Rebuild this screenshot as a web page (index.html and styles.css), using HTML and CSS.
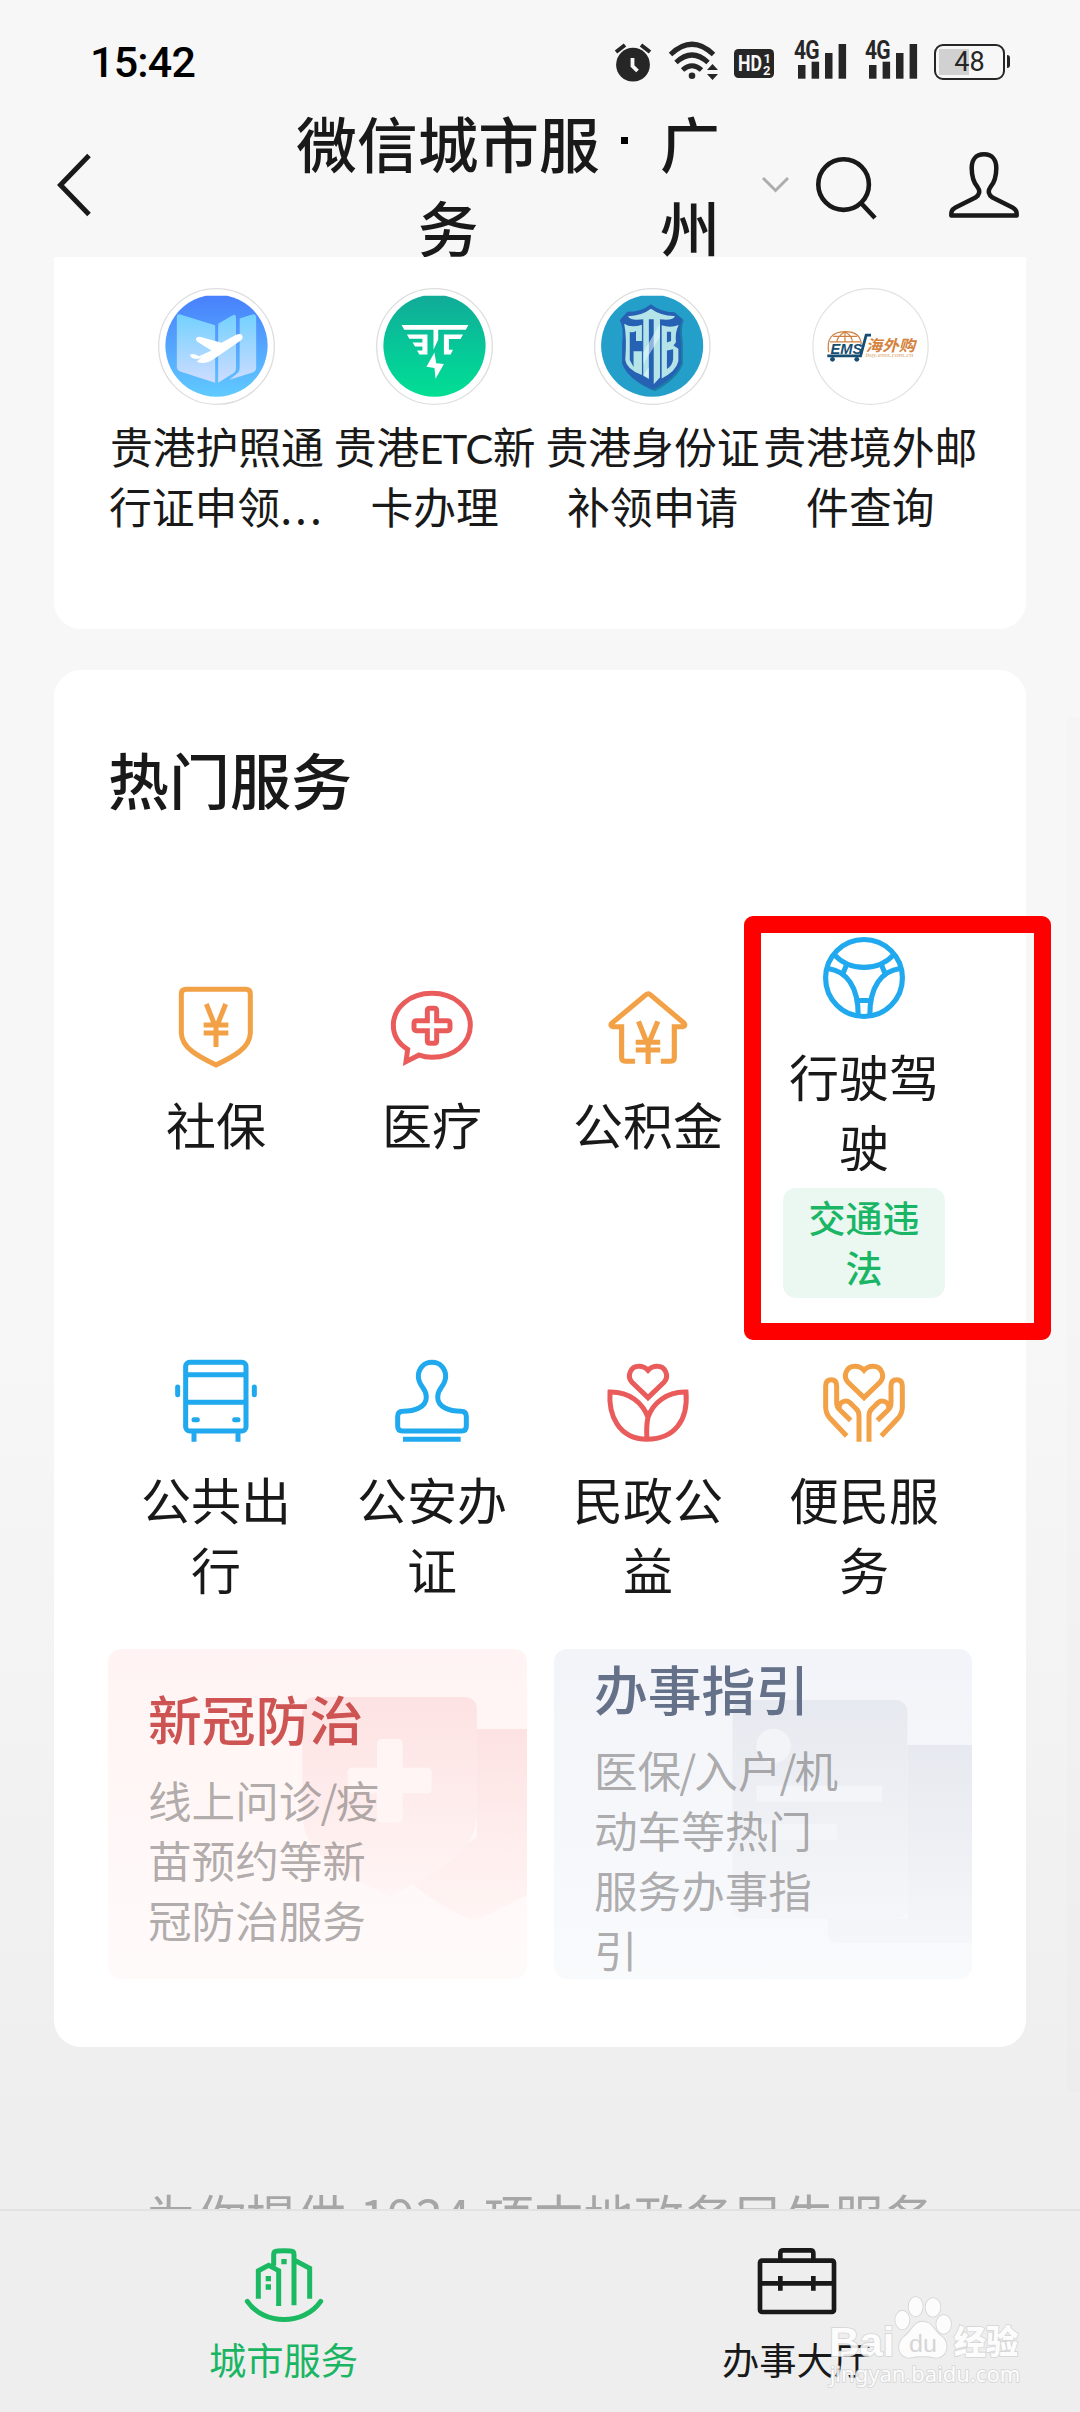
FILE: index.html
```html
<!DOCTYPE html>
<html lang="zh-CN">
<head>
<meta charset="utf-8">
<title>微信城市服务</title>
<link rel="stylesheet" href="styles.css">
</head>
<body>
<div class="screen">
  <header class="top">
    <div class="status">
      <span class="clock">15:42</span>
      <div class="status-icons">
        <svg width="38" height="42" viewBox="614 42 38 42">
          <circle cx="633" cy="64.7" r="16.9" fill="#262626"/>
          <path d="M616 52l9-7M650 52l-9-7" stroke="#262626" stroke-width="4" fill="none"/>
          <path d="M632.5 58v8l5 5" stroke="#f7f7f7" stroke-width="3.8" fill="none"/>
        </svg>
        <svg class="wifi" width="52" height="42" viewBox="668 40 52 42" fill="none" stroke="#262626" stroke-width="5">
          <path d="M670.500 54.500Q692 34 713.500 54.500M676 62.500Q692 47.500 708 62.500M682.500 70Q692 61.500 701.500 70"/>
          <circle cx="692" cy="75.800" r="3.300" fill="#262626" stroke="none"/>
          <path d="M712.500 64l5.500 6h-11zM712.500 80l5.500-6h-11z" fill="#262626" stroke="none"/>
        </svg>
        <svg class="hd" width="40" height="29" viewBox="0 0 40 29">
          <rect width="40" height="29" rx="4.500" fill="#262626"/>
          <g fill="#f7f7f7">
            <text x="4" y="22" class="hd-main" textLength="24" lengthAdjust="spacingAndGlyphs">HD</text>
            <text x="29.500" y="14" class="hd-sub">1</text>
            <text x="29" y="25.500" class="hd-sub">2</text>
          </g>
        </svg>
        <span class="signal"><b>4G</b>
          <svg width="54" height="38" viewBox="794 42 54 38" fill="#262626"><rect x="798" y="65" width="7.500" height="13.700"/><rect x="811.600" y="61.700" width="7.500" height="17"/><rect x="825" y="53" width="7.500" height="25.700"/><rect x="838.600" y="44" width="7.500" height="34.700"/></svg>
        </span>
        <span class="signal second"><b>4G</b>
          <svg width="54" height="38" viewBox="794 42 54 38" fill="#262626"><rect x="798" y="65" width="7.500" height="13.700"/><rect x="811.600" y="61.700" width="7.500" height="17"/><rect x="825" y="53" width="7.500" height="25.700"/><rect x="838.600" y="44" width="7.500" height="34.700"/></svg>
        </span>
        <span class="battery">48</span>
      </div>
    </div>
    <nav class="nav">
      <svg class="back" width="36" height="64" viewBox="56 153 36 64" fill="none" stroke="#191919" stroke-width="5"><path d="M89 155.500L60.500 185L89 214.500"/></svg>
      <h1 class="title">微信城市服务</h1>
      <span class="dot"></span>
      <div class="city">广州</div>
      <svg class="caret" width="28" height="17" viewBox="761 176 28 17" fill="none" stroke="#adadad" stroke-width="3"><path d="M763 178l12.500 12.500L788 178"/></svg>
      <svg class="search" width="62" height="64" viewBox="815 156 62 64" fill="none" stroke="#191919" stroke-width="4.600"><circle cx="843.600" cy="184.600" r="25.300"/><path d="M861 203l14 15"/></svg>
      <svg class="user" width="72" height="68" viewBox="948 151 72 68" fill="none" stroke="#191919" stroke-width="4.500" stroke-linejoin="round"><path d="M984 154.300C975 154.300 971.700 161 971.700 168C971.700 179 974.500 183.500 977.500 187C980.500 191 979.500 195 975.500 197.500L955.500 207.500C951 210 951.300 212.500 951.300 215.600H1016.700C1016.700 212.500 1017 210 1012.500 207.500L992.500 197.500C988.500 195 987.500 191 990.500 187C993.500 183.500 996.300 179 996.300 168C996.300 161 993 154.300 984 154.300Z"/></svg>
    </nav>
  </header>

  <main class="content">
    <section class="card recent">
      <a class="app">
        <svg class="app-icon" viewBox="356 84 348 348">
          <defs>
            <linearGradient id="sky" x1="0" y1="0" x2="0" y2="1"><stop offset="0" stop-color="#4880fd"/><stop offset="1" stop-color="#60cbff"/></linearGradient>
            <linearGradient id="page" x1="0" y1="0" x2="0" y2="1"><stop offset="0" stop-color="#73d1ff"/><stop offset="1" stop-color="#cfdcff"/></linearGradient>
          </defs>
          <circle cx="530" cy="258" r="172" fill="#fff" stroke="#dedede" stroke-width="4"/>
          <path d="M498 107H562A152 152 0 1 1 498 107Z" fill="url(#sky)"/>
          <path d="M412 170Q412 160 422 163L526 195V366L424 333Q412 329 412 318ZM535 190L578 165Q588 160 588 171V322Q588 332 581 337L535 366ZM599 175L636 163Q648 160 648 172V322Q648 332 638 335L568 357L593 337Q599 332 599 320Z" fill="url(#page)"/>
          <path d="M469 238Q468 229 480 229L545 247L590 222Q607 217 608 231Q608 236 600 242L518 298Q496 313 471 303L486 290Q480 295 471 295Q450 294 452 282Q460 277 478 287L515 270L473 244Z" fill="#fff"/>
        </svg>
        <span class="app-name">贵港护照通<br>行证申领<span class="ellipsis">...</span></span>
      </a>
      <a class="app">
        <svg class="app-icon" viewBox="1009 84 348 348">
          <defs><linearGradient id="etc" x1="0" y1="0" x2="0" y2="1"><stop offset="0" stop-color="#11ab98"/><stop offset=".6" stop-color="#05cc98"/><stop offset="1" stop-color="#02de94"/></linearGradient></defs>
          <circle cx="1183" cy="258" r="172" fill="#fff" stroke="#dedede" stroke-width="4"/>
          <path d="M1151 107H1215A152 152 0 1 1 1151 107Z" fill="url(#etc)"/>
          <g fill="#fff">
            <path d="M1085 194H1284L1276 208H1194V238L1180 268V208H1093Z"/>
            <path d="M1101 222H1162V282H1138L1131 270H1147V258H1125L1118 246H1147V235H1108ZM1211 222H1268L1260 236H1226V268H1238L1231 282H1211Z"/>
            <path d="M1183 276L1159 318L1183 322L1186 354L1211 310L1188 308Z"/>
          </g>
        </svg>
        <span class="app-name">贵港<span class="latin">ETC</span>新<br>卡办理</span>
      </a>
      <a class="app">
        <svg class="app-icon" viewBox="159 84 337 348" preserveAspectRatio="none">
          <ellipse cx="327" cy="258" rx="166" ry="172" fill="#fff" stroke="#dedede" stroke-width="4"/>
          <path d="M295 107H358A147 152 0 1 1 295 107Z" fill="#249fca"/>
          <path d="M329 138Q360 158 392 157L418 180Q408 200 415 245V310Q400 355 334 391Q262 360 246 312Z" fill="#17678f" opacity=".6"/>
          <path d="M323 132Q350 155 390 156L414 178Q402 200 410 245V308Q396 350 329 386Q254 355 240 308V250Q246 200 233 180L255 155Q295 155 323 132Z" fill="#2761b3"/>
          <g fill="#b5e4e8">
            <path d="M323 146Q352 168 392 167Q388 182 349 177V350L331 370V177H317V355L301 345V177Q262 182 257 168Q297 167 323 146Z"/>
            <path d="M246 190Q266 204 297 193V242H280V212Q270 218 262 214V298L273 319V272H297V343Q253 326 249 298Q254 230 246 190Z"/>
            <path d="M354 195Q380 204 403 194Q392 215 395 245L388 255L402 265V302Q395 332 354 353ZM369 214V246L381 242V214ZM369 270V325Q385 315 387 295V266Z" fill-rule="evenodd"/>
          </g>
          <path d="M349 190L349 230L301 310V275ZM317 320V352L301 343Z" fill="#e8faff" opacity=".55"/>
        </svg>
        <span class="app-name">贵港身份证<br>补领申请</span>
      </a>
      <a class="app">
        <svg class="app-icon" viewBox="790 84 337 348" preserveAspectRatio="none">
          <ellipse cx="958.500" cy="258" rx="166" ry="172" fill="#fff" stroke="#e2e2e2" stroke-width="3.500"/>
          <g fill="none" stroke="#cf8040" stroke-width="3.500"><path d="M838 275Q828 215 885 214Q930 214 932 252"/><path d="M842 244H930M851 228H920M885 214V246M885 214Q860 230 862 246M885 214Q908 228 906 246"/></g>
          <text x="843" y="279" class="ems" textLength="92" lengthAdjust="spacingAndGlyphs">EMS</text>
          <path d="M834 286H930L946 224H960" fill="none" stroke="#174d70" stroke-width="8"/>
          <circle cx="849" cy="296" r="7" fill="#174d70"/><circle cx="919" cy="296" r="7" fill="#174d70"/>
          <text x="945" y="271" class="ems-cn" textLength="142" lengthAdjust="spacingAndGlyphs">海外购</text>
          <text x="944" y="288" class="ems-url" textLength="138" lengthAdjust="spacingAndGlyphs">buy.ems.com.cn</text>
        </svg>
        <span class="app-name">贵港境外邮<br>件查询</span>
      </a>
    </section>

    <section class="card hot">
      <h2 class="section-title">热门服务</h2>
      <div class="services">
        <a class="service">
          <svg viewBox="405 855 246 246" class="icon orange"><path d="M439 868H617Q631 868 631 882V998C631 1045 575 1072 528 1095C481 1072 424 1045 424 998V882Q424 868 439 868Z"/><path d="M499 912L524 975M557 912L532 975M528 968V1041M491 975H565M491 999H565"/></svg>
          <span>社保</span>
        </a>
        <a class="service">
          <svg viewBox="1053 855 246 246" class="icon red"><path d="M1176 880C1242 880 1291 922 1291 976C1291 1030 1242 1072 1176 1072Q1155 1072 1137 1065L1098 1085L1103 1048C1075 1031 1060 1006 1060 976C1060 922 1110 880 1176 880Z"/><path d="M1170 925H1183Q1190 925 1190 932V962H1222Q1230 962 1230 970V984Q1230 992 1222 992H1190V1023Q1190 1030 1183 1030H1170Q1162 1030 1162 1023V992H1130Q1122 992 1122 984V970Q1122 962 1130 962H1162V932Q1162 925 1170 925Z"/></svg>
          <span>医疗</span>
        </a>
        <a class="service">
          <svg viewBox="194.600 315 238 246" preserveAspectRatio="none" class="icon orange"><path d="M276 544H248Q237 544 237 532V440H212Q203 438 208 430L308 344Q314 339 320 344L418 429Q424 437 415 440H390V532Q390 544 379 544H351"/><path d="M286 424L309 484M342 424L318 484M314 480V552M278 487H349M278 510H349"/></svg>
          <span>公积金</span>
        </a>
        <a class="service tall">
          <svg viewBox="822 171 238 245" preserveAspectRatio="none" class="icon blue"><ellipse cx="941" cy="293.500" rx="111.500" ry="115"/><path d="M853 222C900 275 982 275 1029 222M836 265C890 272 925 320 924 405M1046 265C992 272 957 320 958 405M890 255L880 280M992 255L1002 280M924 361H958"/></svg>
          <span>行驶驾驶</span>
          <em class="tag">交通违法</em>
        </a>
        <a class="service">
          <svg viewBox="225 90 246 246" class="icon blue"><rect x="257" y="97" width="181" height="206" rx="12"/><path d="M257 134H438M257 217H438M282 307V335M414 307V335"/><path d="M233 171V194M463 171V194M282 269H292M404 269H414" stroke-linecap="round"/></svg>
          <span>公共出行</span>
        </a>
        <a class="service">
          <svg viewBox="873 90 246 246" class="icon blue"><path d="M996 97C971 97 955 116 955 139C955 170 979 172 979 201C979 232 943 244 909 244Q893 244 893 260V288Q893 303 908 303H1085Q1099 303 1099 288V260Q1099 244 1083 244C1049 244 1013 232 1013 201C1013 172 1037 170 1037 139C1037 116 1021 97 996 97ZM909 328H1082"/></svg>
          <span>公安办证</span>
        </a>
        <a class="service">
          <svg viewBox="201 90 246 246" class="icon red"><path d="M324 203L276 157C260 140 270 109 297 109Q313 109 324 121Q335 109 351 109C378 109 388 140 372 157ZM324 262C308 220 270 185 210 186C205 255 235 327 321 328C405 327 445 270 438 186C380 184 338 220 324 262Q318 290 321 328"/></svg>
          <span>民政公益</span>
        </a>
        <a class="service">
          <svg viewBox="849 90 246 246" class="icon orange"><path d="M972 203L924 157C908 140 918 109 945 109Q961 109 972 121Q983 109 999 109C1026 109 1036 140 1020 157ZM920 318L870 265Q857 250 857 230V168Q857 149 874 149Q890 149 890 168V218Q890 231 900 240L932 271M899 239C892 218 916 206 930 218L948 236Q957 244 957 258V335M1024 318L1074 265Q1087 250 1087 230V168Q1087 149 1070 149Q1053 149 1053 168V218Q1053 231 1044 240L1012 271M1045 239C1052 218 1028 206 1014 218L996 236Q987 244 987 258V335"/></svg>
          <span>便民服务</span>
        </a>
      </div>
      <div class="promos">
        <a class="promo covid">
          <svg class="promo-art" viewBox="174 87 1257 990" preserveAspectRatio="none">
            <defs><linearGradient id="rose" x1="0" y1="0" x2="0" y2="1"><stop offset="0" stop-color="#fde2e3"/><stop offset="1" stop-color="#fff5f4"/></linearGradient></defs>
            <path d="M1281 327H1431V826L1272 904Q1150 850 1090 793L1281 650Z" fill="url(#rose)"/>
            <path d="M800 231H1240Q1281 231 1281 272V575C1281 710 1150 760 1020 829C880 760 757 710 757 575V272Q757 231 800 231Z" fill="url(#rose)"/>
            <path d="M995 357H1044Q1058 357 1058 371V443H1131Q1145 443 1145 457V506Q1145 520 1131 520H1058V594Q1058 608 1044 608H995Q981 608 981 594V520H907Q893 520 893 506V457Q893 443 907 443H981V371Q981 357 995 357Z" fill="#fff5f4"/>
          </svg>
          <h3>新冠防治</h3>
          <p>线上问诊<i>/</i>疫<br>苗预约等新<br>冠防治服务</p>
        </a>
        <a class="promo guide">
          <svg class="promo-art" viewBox="68 87 1192 990" preserveAspectRatio="none">
            <defs><linearGradient id="mist" x1="0" y1="0" x2="0" y2="1"><stop offset="0" stop-color="#e6e9ef"/><stop offset="1" stop-color="#f5f6f9"/></linearGradient></defs>
            <path d="M1076 375H1260V969H880Q850 969 850 939V897H1076Z" fill="url(#mist)"/>
            <rect x="577" y="240" width="499" height="657" rx="35" fill="url(#mist)"/>
            <ellipse cx="694" cy="378" rx="49" ry="52" fill="#f2f4f8"/>
            <path d="M646 497H1004V545H646ZM646 613H875V661H646Z" fill="#f3f5f9"/>
          </svg>
          <h3>办事指引</h3>
          <p>医保<i>/</i>入户<i>/</i>机<br>动车等热门<br>服务办事指<br>引</p>
        </a>
      </div>
    </section>
    <p class="summary">为你提供 1934 项本地政务民生服务</p>
    <div class="scrollbar"></div>
    <div class="highlight"></div>
  </main>

  <footer class="tabs">
    <a class="tab active">
      <svg width="80" height="76" viewBox="430 292 240 228" fill="none" stroke="#1ab962" stroke-width="15"><path d="M473 444V360L504 344L534 360V466M519 345V312Q519 301 530 301Q550 299 570 301Q580 301 580 312V464M584 330L627 353V444"/><path d="M440 452C490 525 610 525 660 452" stroke-linecap="round"/><path d="M542 325h16v16h-16zM495 376h16v16h-16zM495 401h16v16h-16z" fill="#1ab962" stroke="none"/></svg>
      <span>城市服务</span>
    </a>
    <a class="tab">
      <svg width="80" height="76" viewBox="409 292 240 228" fill="none" stroke="#191919" stroke-width="14"><rect x="418" y="330" width="222" height="154" rx="6"/><path d="M479 330V308Q479 299 488 299H569Q578 299 578 308V330M418 398H640M479 376V420M578 376V420"/></svg>
      <span>办事大厅</span>
    </a>
    <svg class="watermark" width="210" height="104" viewBox="620 430 630 312">
      <g fill="#fff" stroke="#d2d2d2" stroke-width="5" paint-order="stroke" opacity=".88">
        <text x="627" y="618" class="wm-logo" textLength="195" lengthAdjust="spacingAndGlyphs">Bai</text>
        <ellipse cx="846" cy="511" rx="21" ry="28"/><ellipse cx="886" cy="471" rx="21" ry="29"/><ellipse cx="938" cy="473" rx="22" ry="28"/><ellipse cx="970" cy="524" rx="22" ry="28"/>
        <path d="M907 516C935 516 942 545 965 562C990 582 978 624 948 624Q907 616 866 624C835 622 826 582 851 562C875 545 880 516 907 516Z"/>
        <text x="1000" y="612" class="wm-cn" textLength="194" lengthAdjust="spacingAndGlyphs">经验</text>
        <text x="628" y="697" class="wm-url" textLength="572" lengthAdjust="spacingAndGlyphs">jingyan.baidu.com</text>
      </g>
      <text x="866" y="608" class="wm-du" textLength="84" lengthAdjust="spacingAndGlyphs">du</text>
    </svg>
  </footer>
</div>
</body>
</html>
```
FILE: styles.css
```css
* { box-sizing: border-box; margin: 0; padding: 0; }

body {
  width: 1080px;
  height: 2412px;
  overflow: hidden;
  font-family: "Noto Sans CJK SC", sans-serif;
  color: #191919;
}

svg { display: block; flex: none; }

.screen {
  display: flex;
  flex-direction: column;
  height: 2412px;
  background: linear-gradient(#f7f7f7 0, #f7f7f7 1300px, #eee 2150px);
}

/* Status bar and navigation */
.top { height: 257px; flex: none; }

.status {
  display: flex;
  justify-content: space-between;
  height: 100px;
  padding: 40px 70px 0 90px;
}

.clock {
  font: 500 43px/44px Roboto, sans-serif;
  letter-spacing: -.8px;
  color: #000;
}

.status-icons { display: flex; align-items: flex-start; padding-top: 2px; }
.wifi { margin: -2px 0 0 16px; }

.hd { margin: 7px 0 0 14px; }
.hd-main { font: 700 22px Roboto, sans-serif; }
.hd-sub { font: 700 13px Roboto, sans-serif; }

.signal { position: relative; margin-left: 20px; }
.signal.second { margin-left: 17px; }
.signal b {
  position: absolute;
  left: 0;
  top: -1px;
  font: 700 25px/20px Roboto, sans-serif;
  letter-spacing: -1px;
  color: #262626;
  transform: scaleX(.84);
  transform-origin: 0 0;
}

.battery {
  position: relative;
  width: 71px;
  height: 36px;
  margin: 2px 5px 0 15px;
  border: 2.5px solid #262626;
  border-radius: 9px;
  background: linear-gradient(#d1d1d1, #d1d1d1) 3px 2.5px / 30px 26px no-repeat;
  font: 400 27px/32px Roboto, sans-serif;
  text-align: center;
  color: #262626;
}
.battery::after {
  content: "";
  position: absolute;
  right: -7px;
  top: 9px;
  width: 3.5px;
  height: 13px;
  border-radius: 0 3px 3px 0;
  background: #262626;
}

.nav { display: flex; height: 157px; padding-left: 56px; }
.back { margin-top: 53px; }
.title {
  width: 310px;
  margin-left: 203px;
  font-size: 60.700px;
  font-weight: 500;
  line-height: 84px;
  text-align: center;
  padding-right: 4px;
}
.dot { width: 7px; height: 7px; margin: 37px 32px 0 16px; background: #000; }
.city { width: 61px; font-size: 60px; font-weight: 500; line-height: 84px; }
.caret { margin: 76px 0 0 40px; }
.search { margin: 56px 0 0 26px; }
.user { margin: 51px 0 0 71px; }

/* Cards */
.content { position: relative; flex: 1; overflow: hidden; padding: 0 54px; }
.card { background: #fff; border-radius: 27px; }

.recent {
  display: grid;
  grid-template-columns: repeat(4, 217.8px);
  height: 372px;
  padding: 31px 0 0 54px;
  border-radius: 0 0 27px 27px;
}
.app { display: flex; flex-direction: column; align-items: center; }
.app-icon { width: 117px; height: 117px; }
.app-name {
  margin-top: 11px;
  font-size: 42.800px;
  line-height: 59.500px;
  white-space: nowrap;
  text-align: center;
}
.ellipsis { letter-spacing: 3px; }
.latin { font-family: Lato, sans-serif; font-size: 41.500px; line-height: 1; letter-spacing: -.5px; }
.ems { font: italic 900 41px "Liberation Sans", sans-serif; fill: #174d70; }
.ems-cn { font: italic 700 46px "Noto Sans CJK SC", sans-serif; fill: #d4823d; }
.ems-url { font: italic 20px "Liberation Serif", serif; fill: #dba26c; }

.hot { height: 1377px; margin-top: 41px; padding: 0 54px; }
.section-title {
  padding-top: 67px;
  font-size: 61px;
  font-weight: 500;
  line-height: 84px;
}

.services {
  display: grid;
  grid-template-columns: repeat(4, 216px);
  grid-template-rows: 423px 289px;
  margin-top: 116px;
}
.service {
  display: flex;
  flex-direction: column;
  align-items: center;
  padding-top: 48px;
  font-size: 50px;
  line-height: 70px;
  text-align: center;
}
.service span { width: 156px; margin-top: 21px; }
.service.tall, .service:nth-child(n+5) { padding-top: 0; }

.icon { width: 82px; height: 82px; fill: none; stroke-width: 15; overflow: visible; }
.orange { stroke: #f2a147; }
.red { stroke: #ea5c5c; }
.blue { stroke: #20a9ee; }

.tag {
  width: 162px;
  height: 110px;
  margin-top: 8px;
  padding: 4px 24px;
  border-radius: 13px;
  background: #ebf8f2;
  color: #1ab565;
  font-size: 37px;
  font-style: normal;
  font-weight: 500;
  line-height: 50px;
}

.promos { display: grid; grid-template-columns: 419px 418px; gap: 27px; }
.promo {
  position: relative;
  display: flex;
  flex-direction: column;
  justify-content: center;
  height: 330px;
  padding: 0 0 3px 40px;
  border-radius: 13px;
  overflow: hidden;
}
.promo-art { position: absolute; inset: 0; width: 100%; height: 100%; }
.promo h3, .promo p { z-index: 1; white-space: nowrap; }
.promo h3 { font-size: 53.800px; font-weight: 500; line-height: 83px; margin-bottom: 10px; }
.promo p { font-size: 43.600px; line-height: 60px; color: rgba(80, 76, 76, .45); }
.promo i { font-style: normal; margin: 0 -2px; }
.covid { background: linear-gradient(#fff4f3, #fffafa); }
.covid h3 { color: #cd5453; }
.guide { background: linear-gradient(#f2f4f9, #f9fafc); }
.guide h3 { color: #657189; }

.summary {
  margin: 133px -20px 0;
  font-size: 50px;
  line-height: 70px;
  text-align: center;
  white-space: nowrap;
  word-spacing: 2px;
  color: #a6a6a6;
}

.scrollbar {
  position: absolute;
  right: 0;
  top: 460px;
  width: 13px;
  height: 1375px;
  background: rgba(0, 0, 0, .008);
}

.highlight {
  position: absolute;
  left: 744px;
  top: 658.500px;
  width: 307px;
  height: 424px;
  border: 17.500px solid #f00;
  border-radius: 9px;
}

/* Bottom tabs */
.tabs {
  position: relative;
  display: flex;
  flex: none;
  height: 203px;
  padding: 37px 27px 0;
  border-top: 2px solid #e2e2e2;
  background: #eee;
}
.tab {
  display: flex;
  flex-direction: column;
  align-items: center;
  width: 513px;
  font-size: 37.300px;
  line-height: 50px;
}
.tab span { margin-top: 10px; }
.active { color: #1ab562; }

.watermark { position: absolute; left: 827px; top: 82px; }
.wm-logo { font: 700 124px "Liberation Sans", sans-serif; }
.wm-cn { font: 900 98px "Noto Sans CJK SC", sans-serif; }
.wm-url { font: 66px "Noto Sans", sans-serif; }
.wm-du { font: 74px "Liberation Sans", sans-serif; fill: #d6d6d6; }
```
